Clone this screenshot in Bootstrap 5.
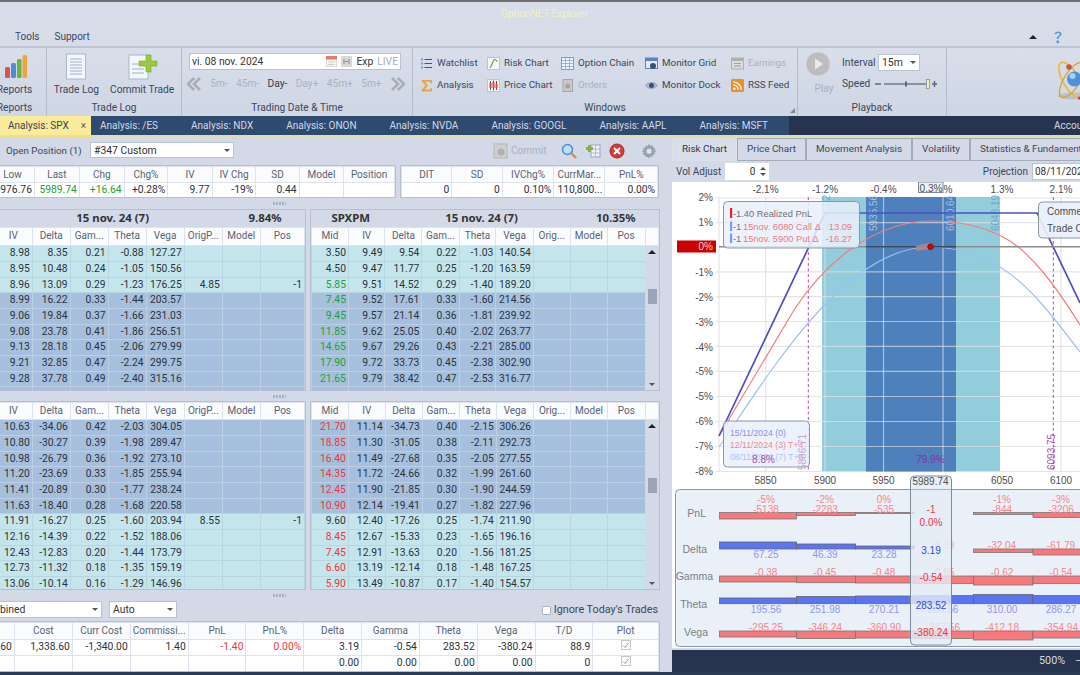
<!DOCTYPE html>
<html lang="en">
<head>
<meta charset="utf-8">
<title>OptionNET Explorer</title>
<link href="https://cdn.jsdelivr.net/npm/bootstrap@5.3.0/dist/css/bootstrap.min.css" rel="stylesheet">
<style>
html,body{margin:0;width:1080px;height:675px;overflow:hidden}
body{background:#d3d9e7;color:#3c4759;font-family:Roboto,"Noto Sans",sans-serif;font-size:10.2px;line-height:14px}
.top-strip{height:2px;background:#6f6f6f}
.title-row{height:25px;background:#d6dde9;color:#f1efc4;font-size:10px;line-height:24px;padding-left:501px}
.menu-row{height:19px;background:#d6dde9;padding:1px 0 0 15px;gap:15px;line-height:18px;font-size:10px}
.menu-tools{margin-left:auto;margin-right:17px;gap:16px}
.tri-up{width:0;height:0;border:4px solid transparent;border-top:0;border-bottom-color:#222}
.ribbon{height:70px;border-top:2px solid #bcc4d2;background:linear-gradient(#d8deea,#cfd6e4)}
.rb-group{display:flex;flex-direction:column;border-right:1px solid #b4bccb;flex:none;height:68px;position:relative}
.rb-body{flex:1;min-height:0}
.rb-label{height:17px;line-height:17px;text-align:center}
.rb-reports{width:64px;margin-left:-17px}
.rb-trade{width:135px}
.rb-date{width:231px;padding-left:7px}
.rb-date .rb-label{margin-left:-7px}
.rb-win{width:385px}
.rb-play{width:149px}
.big-btn{display:flex;flex-direction:column;align-items:center;padding-top:4px}
.big-btn svg{height:30px;margin-bottom:1px}
.trade-btns{gap:11px}
.date-box{width:212px;height:17px;margin-top:5px;background:#fff;border:1px solid #b9c2d1;padding:0 2px 0 2px;color:#333;font-size:10.3px}
.live-tag{color:#a4b0c3}
.step-row{height:19px;margin-top:4px;width:218px;margin-left:-2px;color:#aab2bf;font-size:10.2px}
.step-on{color:#2f3a4c}
.win-grid{display:grid;grid-template-columns:67px 74px 84px 86px auto;grid-auto-rows:22px;padding:4px 0 0 7px;font-size:9.8px}
.win-cell{display:flex;align-items:center;gap:4px}
.win-cell svg{width:13px;height:13px;flex:none}
.off-txt{color:#a9b1bd}
.corner-mark{position:absolute;right:2px;bottom:3px;width:0;height:0;border-style:solid;border-width:0 0 5px 5px;border-color:transparent transparent #7c8798}
.play-col{width:44px;padding:3px 0 0 8px;color:#a9b1bd;text-align:center}
.play-col svg{display:block;width:26px;height:26px;margin:0 0 5px -1px}
.rate-col{padding-top:6px}
.lbl-int{width:35px}
.lbl-speed{width:29px}
.combo-box{background:#fff;border:1px solid #b9c2d1;padding:0 3px;color:#333;height:17px;line-height:15px;font-size:10.4px}
.combo-int{width:42px;margin-left:1px}
.caret-dn{width:0;height:0;border:3px solid transparent;border-bottom:0;border-top-color:#555}
.speed-row{margin-top:4px;height:18px;gap:3px}
.doc-bar{height:19px;background:#26344f;color:#cfd9e8;line-height:18px;padding-top:0}
.doc-tabs{width:789px;flex:none;background:#2f4a6f;border:0;flex-wrap:nowrap}
.doc-tabs .nav-link{color:#cfd9e8;padding:1px 16.5px 0;border:0;border-radius:0;font-size:10px;line-height:18px;white-space:nowrap}
.doc-tabs .nav-item:nth-child(2) .nav-link{padding-left:9px}
.doc-tabs .nav-link.active{background:#faeb9a;color:#3a4356;width:91px;padding:1px 0 0 8px}
.tab-x{margin-left:12px;color:#555}
.acct-lbl{margin-left:265px;flex:none;font-size:10px;padding-top:1px}
.sun-line{height:2px;background:linear-gradient(90deg,#f0e27e 91px,#dedfae 91px)}
.main-area{height:535px}
.left-pane{width:670px;flex:none}
.right-pane{width:410px;flex:none;padding-left:2px}
.pos-bar{height:28px;padding:5px 0 0 6px}
.pos-lbl{width:76px;flex:none;font-size:9.8px;white-space:nowrap;padding-top:2px}
.combo-pos{width:144px;margin-left:8px;height:16px}
.pos-tools{margin-left:auto;padding:1px 13px 0 0}
.pos-tools svg{width:16px;height:16px;flex:none}
.commit-off{color:#a9b1bd;width:50px;margin-right:18px;gap:2px;font-size:10px}
.sum-row{gap:4px;height:33px}
.gutter{height:11px;position:relative}
.gutter::after{content:"";position:absolute;left:273px;top:4px;width:13px;height:3px;background:repeating-linear-gradient(90deg,#aab3c3 0 2px,transparent 2px 3px)}
.gut-b{height:10px}
.cell-box{overflow:hidden;flex:none;border:1px solid #b7c0d0;background:#fff}
.sum-a{width:396px;border-left:0}
.sum-b{width:259px}
.opt-pair{gap:4px;align-items:flex-start}
.opt-l{width:306px;border-left:0}
.opt-r{width:350px;position:relative}
.box-hi{height:182px}
.box-lo{height:189px}
.date-band{height:17px;background:#d3d9e7;color:#333;font-family:"Noto Sans",sans-serif;font-weight:700;font-size:11.4px;line-height:16px;text-align:center}
.band-a{width:226px}
.band-b{width:80px}
.band-d{width:183px}
.band-e{width:87px}
.grid-tbl.table{table-layout:fixed;width:auto;margin:0;--bs-table-bg:#fff;--bs-table-color:#2a3240;color:#2a3240;--cell-line:#dde2ec}
.sum-a .grid-tbl.table{margin-left:-10px}
.opt-l .grid-tbl.table{margin-left:-6px}
.pos-grid .grid-tbl.table{margin-left:-44px}
.grid-tbl.table>:not(caption)>*>*{padding:0 2px;height:16px;line-height:14px;font-size:10.3px;text-align:right;white-space:nowrap;overflow:hidden;border:1px solid var(--cell-line);box-shadow:none;background-color:var(--bs-table-bg)}
.grid-tbl.table>thead>tr>th{height:17px;font-weight:400;text-align:center;vertical-align:middle;--bs-table-color:#586375;color:#586375;--bs-table-bg:#fafbfd;line-height:14px;font-size:10px}
.sum-row .grid-tbl.table>thead>tr>th{height:16px}
.box-hi .grid-tbl.table>thead>tr>th{height:18px;padding-bottom:2px}
.grid-tbl.table>tbody>tr:nth-child(3n)>td{height:15px}
.grid-tbl.table>tbody>tr.rw-lt{--bs-table-bg:#c5e5ec;--cell-line:#b7d6df}
.grid-tbl.table>tbody>tr.rw-dk{--bs-table-bg:#a6bfdc;--cell-line:#bccfe4}
.grid-tbl.table>tbody>tr>td.tx-up{--bs-table-color:#22a034;color:#22a034}
.grid-tbl.table>tbody>tr>td.tx-dn{--bs-table-color:#f0333d;color:#f0333d}
.c-37{width:37.4px}
.c-38{width:38.2px}
.scroll-track{position:absolute;right:0;bottom:0;width:14px;background:#d3d9e7;display:flex;flex-direction:column;align-items:center;justify-content:space-between;padding:4px 0}
.box-hi .scroll-track{top:36px}
.box-lo .scroll-track{top:18px}
.scroll-thumb{width:9px;height:15px;background:#9aa4b4;position:absolute;left:3px}
.box-hi .scroll-thumb{top:43px}
.box-lo .scroll-thumb{top:58px}
.ctl-row{height:20px;align-items:flex-start}
.combo-comb{width:103px;margin-left:-1px;padding-left:0}
.combo-auto{width:68px;margin-left:7px}
.trade-check{margin-left:auto;margin-right:12px;gap:3px;height:18px;font-size:10.8px}
.trade-check .form-check-input{width:9px;height:9px;margin:0;border-radius:1px;border-color:#aab3c3}
.pos-grid{width:660px;border-left:0;height:51px}
.grid-tbl.table>tbody>tr>td.tx-mid{text-align:center}
.tick-box{display:block;width:10px;height:10px;margin:0 auto}
.pane-tabs{height:24px;border:0;flex-wrap:nowrap;padding-top:1px;margin-bottom:0}
.pane-tabs .nav-link{height:23px;padding:0 9px;border:1px solid #a2acbc;border-radius:0;color:#3c4759;background:#d3d9e7;line-height:20px;font-size:9.9px;margin:0;white-space:nowrap}
.pane-tabs .nav-link.active{color:#2e3848;background:#d8deea;border-bottom-color:#d8deea}
.vol-row{height:21px;padding:0 0 0 4px;font-size:10px}
.spin-box{width:44px;height:17px;margin-left:4px;background:#fff;padding:0 3px 0 0;gap:5px;color:#333;justify-content:flex-end}
.spin-arrows{width:6px;display:flex;flex-direction:column;gap:3px}
.spin-arrows i{display:block;width:0;height:0;border:3px solid transparent}
.spin-arrows i:first-child{border-top:0;border-bottom-color:#555}
.spin-arrows i:last-child{border-bottom:0;border-top-color:#555}
.proj-lbl{margin-left:auto;flex:none}
.proj-box{width:60px;margin-left:4px;margin-right:-12px;height:17px;background:#fff;border:1px solid #b9c2d1;padding:0 2px;color:#333;flex:none;line-height:15px;overflow:hidden;white-space:nowrap}
.risk-svg{display:block;width:408px;height:466px;background:#fff}
.risk-svg text{font-family:"Liberation Sans",sans-serif;font-size:10px;fill:#4d4d4d}
.risk-svg .t-m{text-anchor:middle}
.risk-svg .t-e{text-anchor:end}
.risk-svg .gl{stroke:#e4e4e4;stroke-width:1.2;fill:none}
.risk-svg .gl-o{stroke:rgba(228,228,228,.65);stroke-width:1.2;fill:none}
.risk-svg .lbl-dk{fill:rgba(190,214,240,.75)}
.risk-svg .lbl-lt{fill:#6ea7c9}
.risk-svg .leg-a{font-size:9.3px;fill:#6b6f76}
.risk-svg .leg-r{font-size:9.3px;fill:#f3767c}
.risk-svg .leg-b{font-size:8.7px}
.risk-svg .side-lbl{font-size:10.5px;fill:#7a7f87}
.risk-svg .pnl-r{fill:#f0333d}
.risk-svg .pale-r{fill:#f3868c}
.risk-svg .pale-b{fill:#8b96f5}
.risk-svg .str-b{fill:#3746e0}
.risk-svg .bar-r{fill:#f6797d;stroke:#777;stroke-width:.8}
.risk-svg .bar-b{fill:#5a74f2;stroke:#666;stroke-width:.8}
.risk-svg .purple{fill:#8e2ea0}
.risk-svg .zero-txt{fill:#f2cfcf}
.risk-svg .be-pale{fill:#c9a5d0}
.status-bar{height:22px;background:#26344f;color:#d3dae6;margin-top:2px;padding-left:367px;gap:10px;font-size:10.8px;line-height:21px}
.foot-strip{height:3px;background:#2a3a55}
</style>
</head>
<body>
<div class="top-strip"></div>
<div class="title-row">OptionNET Explorer</div>
<div class="menu-row d-flex">
  <span>Tools</span><span>Support</span>
  <div class="menu-tools d-flex align-items-center">
    <span class="tri-up"></span>
    <svg width="10" height="14" viewBox="0 0 10 14"><path d="M1.500 4C1.500 1 8.500 .5 8.500 4c0 2.500-3 2.500-3 5H3.800c0-3.500 2.800-3 2.800-5 0-1.500-3-1.500-3 0z" fill="#5b9bd8"/><circle cx="4.800" cy="11.800" r="1.500" fill="#5b9bd8"/></svg>
  </div>
</div>

<div class="ribbon d-flex">
  <div class="rb-group rb-reports">
    <div class="rb-body big-btn">
      <svg width="26" height="30" viewBox="0 0 26 30"><rect x="3" y="15" width="5" height="11" rx="1.500" fill="#d9534f"/><rect x="9" y="11" width="5" height="15" rx="1.500" fill="#4f8fd0"/><rect x="15" y="7" width="4.500" height="19" rx="1.500" fill="#6bb24a"/><rect x="20.500" y="3" width="4.500" height="23" rx="1.500" fill="#eea540"/></svg>
      <span>Reports</span>
    </div>
    <div class="rb-label">Reports</div>
  </div>
  <div class="rb-group rb-trade">
    <div class="rb-body d-flex justify-content-center trade-btns">
      <div class="big-btn"><svg width="24" height="30" viewBox="0 0 24 30"><rect x="2.500" y="2" width="19" height="25" fill="#f4f7fb" stroke="#a9b7cb"/><path d="M6 7h12M6 10h12M6 13h12M6 16h12M6 19h12M6 22h12" stroke="#9fb0c8"/></svg><span>Trade Log</span></div>
      <div class="big-btn"><svg width="32" height="30" viewBox="0 0 32 30"><rect x="3" y="3" width="19" height="24" fill="#f4f7fb" stroke="#a9b7cb"/><path d="M6 12h8M6 17h12M6 21h12" stroke="#9fb0c8"/><path d="M20 3h5v6h6v5h-6v6h-5v-6h-7V9h7z" fill="#9acb3c" stroke="#77a42b" stroke-width=".6"/></svg><span>Commit Trade</span></div>
    </div>
    <div class="rb-label">Trade Log</div>
  </div>
  <div class="rb-group rb-date">
    <div class="rb-body">
      <div class="date-box d-flex align-items-center">
        <span class="flex-grow-1">vi. 08 nov. 2024</span>
        <svg class="me-1" width="11" height="11" viewBox="0 0 11 11"><rect width="11" height="11" fill="#f3f3f3" stroke="#c6c6c6"/><rect width="11" height="3.500" fill="#e8786c"/><path d="M2 6h7M2 8.500h7" stroke="#cfcfcf"/></svg>
        <svg class="me-1" width="11" height="11" viewBox="0 0 11 11"><rect width="11" height="11" fill="#d8d8d8"/><path d="M3 3v5M8 3v5M4 5.500h3" stroke="#888"/></svg>
        <span class="me-1">Exp</span><span class="live-tag">LIVE</span>
      </div>
      <div class="step-row d-flex align-items-center justify-content-between">
        <svg width="15" height="14" viewBox="0 0 15 14"><path d="M7 1 1 7l6 6M13 1 7 7l6 6" fill="none" stroke="#a9aeb6" stroke-width="2.600"/></svg>
        <span>5m-</span><span>45m-</span><span class="step-on">Day-</span><span>Day+</span><span>45m+</span><span>5m+</span>
        <svg width="15" height="14" viewBox="0 0 15 14"><path d="M2 1l6 6-6 6M8 1l6 6-6 6" fill="none" stroke="#a9aeb6" stroke-width="2.600"/></svg>
      </div>
    </div>
    <div class="rb-label">Trading Date &amp; Time</div>
  </div>
  <div class="rb-group rb-win">
    <div class="rb-body win-grid">
      <div class="win-cell"><svg viewBox="0 0 13 13"><path d="M4.500 2.500H12M4.500 6.500H12M4.500 10.500H12" stroke="#48566c" stroke-width="1.200"/><path d="M1 1.500h2v2H1zM1 5.500h2v2H1zM1 9.500h2v2H1z" fill="#6fa0d8"/></svg><span>Watchlist</span></div>
      <div class="win-cell"><svg viewBox="0 0 13 13"><rect x=".5" y=".5" width="12" height="12" fill="#f6f7f9" stroke="#bcc4d0"/><path d="M2.500 10.500c3 0 2.500-8 5.500-8 1.500 0 1.500 2 2.500 2" fill="none" stroke="#6aa84f" stroke-width="1.200"/></svg><span>Risk Chart</span></div>
      <div class="win-cell"><svg viewBox="0 0 13 13"><rect x=".5" y=".5" width="12" height="12" fill="#eef3fb" stroke="#7f9ccc"/><path d="M.5 3.500h12M.5 6.500h12M.5 9.500h12M4.500 .5v12M8.500 .5v12" stroke="#7f9ccc" stroke-width=".7"/></svg><span>Option Chain</span></div>
      <div class="win-cell"><svg viewBox="0 0 13 13"><rect x=".5" y="1" width="12" height="10.500" fill="#dfe8f5" stroke="#5b86bd"/><rect x=".5" y="1" width="12" height="3" fill="#5b86bd"/><circle cx="8" cy="9" r="3" fill="#39506f"/></svg><span>Monitor Grid</span></div>
      <div class="win-cell off-txt"><svg viewBox="0 0 13 13"><rect x=".5" y="1" width="12" height="11" fill="#dcdcdc" stroke="#b0b0b0"/><rect x=".5" y="1" width="12" height="3" fill="#b0b0b0"/><path d="M3 6.500h7M3 9h7" stroke="#a0a0a0"/></svg><span>Earnings</span></div>

      <div class="win-cell"><svg viewBox="0 0 13 13"><path d="M1.500 1H12v3.500h-1L10 2.800H5L8 6.500 5 10.500h5.200l1-1.800h1L12 12.500H1.500v-1.200L5.500 6.500 1.500 2z" fill="#eda33b"/></svg><span>Analysis</span></div>
      <div class="win-cell"><svg viewBox="0 0 13 13"><rect x=".5" y=".5" width="12" height="12" fill="#f8f4f4" stroke="#c3c3c8"/><path d="M3.500 2v9M6.500 1.500v10M9.500 2v9" stroke="#555"/><rect x="2.500" y="4" width="2" height="5" fill="#d24a43"/><rect x="5.500" y="3" width="2" height="6" fill="#d24a43"/><rect x="8.500" y="5" width="2" height="4" fill="#d24a43"/></svg><span>Price Chart</span></div>
      <div class="win-cell off-txt"><svg viewBox="0 0 13 13"><rect x="2" y=".5" width="9.500" height="12" fill="#c9c9c9" stroke="#a6a6a6"/><circle cx="6.700" cy="7" r="2.500" fill="#a3a3a3"/></svg><span>Orders</span></div>
      <div class="win-cell"><svg viewBox="0 0 13 13"><path d="M.5 6.500C3 2.500 10 2.500 12.500 6.500 10 10.500 3 10.500 .5 6.500z" fill="#a9bbd4" stroke="#7c8ca5" stroke-width=".6"/><circle cx="6.500" cy="6.500" r="2.500" fill="#3d4f6c"/></svg><span>Monitor Dock</span></div>
      <div class="win-cell"><svg viewBox="0 0 13 13"><rect width="13" height="13" rx="1.500" fill="#ef8d26"/><circle cx="3.300" cy="9.700" r="1.300" fill="#fff"/><path d="M2.200 5.800a5 5 0 0 1 5 5M2.200 2.800a8 8 0 0 1 8 8" fill="none" stroke="#fff" stroke-width="1.300"/></svg><span>RSS Feed</span></div>
    </div>
    <div class="rb-label">Windows</div>
    <span class="corner-mark"></span>
  </div>
  <div class="rb-group rb-play">
    <div class="rb-body d-flex">
      <div class="play-col">
        <svg viewBox="0 0 26 26"><circle cx="13" cy="13" r="12" fill="#bdbdbd" stroke="#d5d5d5"/><path d="M10 7.500 18 13l-8 5.500z" fill="#e9e9e9"/></svg>
        <span>Play</span>
      </div>
      <div class="rate-col">
        <div class="d-flex align-items-center"><span class="lbl-int">Interval</span><div class="combo-box combo-int d-flex align-items-center justify-content-between"><span>15m</span><i class="caret-dn"></i></div></div>
        <div class="speed-row d-flex align-items-center"><span class="lbl-speed">Speed</span>
          <svg width="64" height="12" viewBox="0 0 64 12"><path d="M1 6h6" stroke="#667" stroke-width="1.500"/><path d="M10 6h42" stroke="#8a93a3" stroke-width="2"/><path d="M32 3.500v5" stroke="#667" stroke-width="2"/><rect x="52.500" y="1.500" width="3" height="9" fill="#f3ecc0" stroke="#777" stroke-width=".6"/><path d="M60.500 3v6M58 6h5" stroke="#667" stroke-width="1.500"/></svg>
        </div>
      </div>
    </div>
    <div class="rb-label">Playback</div>
  </div>
  <div class="flex-grow-1">
    <svg class="d-block ms-auto" width="133" height="60" viewBox="947 48 133 60"><ellipse cx="1074" cy="96" rx="16" ry="3.500" fill="#bbc1cc"/><ellipse cx="1071" cy="80" rx="8" ry="20" transform="rotate(-30 1071 80)" fill="none" stroke="#e8bb37" stroke-width="1.600"/><ellipse cx="1072" cy="80" rx="8" ry="20" transform="rotate(32 1072 80)" fill="none" stroke="#d9a92e" stroke-width="1.400"/><circle cx="1074.500" cy="79" r="7.500" fill="#4b93d6"/><circle cx="1072.500" cy="76" r="3" fill="#a8d2f2"/><circle cx="1069" cy="67" r="2.800" fill="#c8573a"/><circle cx="1079.500" cy="98" r="1.600" fill="#d33"/></svg>
  </div>
</div>

<div class="doc-bar d-flex">
  <ul class="nav doc-tabs">
    <li class="nav-item"><a class="nav-link active" href="#">Analysis: SPX<span class="tab-x">×</span></a></li>
    <li class="nav-item"><a class="nav-link" href="#">Analysis: /ES</a></li>
    <li class="nav-item"><a class="nav-link" href="#">Analysis: NDX</a></li>
    <li class="nav-item"><a class="nav-link" href="#">Analysis: ONON</a></li>
    <li class="nav-item"><a class="nav-link" href="#">Analysis: NVDA</a></li>
    <li class="nav-item"><a class="nav-link" href="#">Analysis: GOOGL</a></li>
    <li class="nav-item"><a class="nav-link" href="#">Analysis: AAPL</a></li>
    <li class="nav-item"><a class="nav-link" href="#">Analysis: MSFT</a></li>
  </ul>
  <span class="acct-lbl">Account</span>
</div>
<div class="sun-line"></div>

<div class="main-area d-flex">
  <div class="left-pane">
    <div class="pos-bar d-flex">
      <span class="pos-lbl">Open Position (1)</span>
      <div class="combo-box combo-pos d-flex align-items-center justify-content-between"><span>#347 Custom</span><i class="caret-dn"></i></div>
      <div class="pos-tools d-flex align-items-start">
        <div class="commit-off d-flex align-items-center"><svg viewBox="0 0 16 16"><rect x="1" y="1" width="13" height="14" fill="#cfcfcf" stroke="#b5b5b5"/><circle cx="8" cy="9" r="3.500" fill="#b0b0b0"/></svg><span>Commit</span></div>
        <svg class="me-1" viewBox="0 0 16 16"><circle cx="6.500" cy="6.500" r="5" fill="#bfdcf5" stroke="#4f8fd0" stroke-width="1.500"/><path d="M10.500 10.500 15 15" stroke="#d98b3a" stroke-width="2.400"/></svg>
        <svg class="ms-1 me-1" viewBox="0 0 16 16"><rect x="6" y="2" width="9" height="12" fill="#eef2f7" stroke="#9aa7ba"/><path d="M10.500 2v12M6 6h9M6 10h9" stroke="#9aa7ba" stroke-width=".7"/><path d="M3 2h3v2h2v3H6v2H3V7H1V4h2z" fill="#86b53a"/></svg>
        <svg class="ms-1" viewBox="0 0 16 16"><circle cx="8" cy="8" r="7" fill="#d63a34" stroke="#a92a26"/><path d="M5 5l6 6M11 5l-6 6" stroke="#fff" stroke-width="2"/></svg>
        <svg class="ms-3" viewBox="0 0 16 16"><path d="M8 1.500l1.200 1.800 2-.7.300 2.100 2.100.3-.7 2 1.800 1-1.800 1 .7 2-2.100.3-.3 2.100-2-.7L8 15l-1.200-1.800-2 .7-.3-2.100-2.100-.3.7-2-1.800-1 1.800-1-.7-2 2.100-.3.300-2.100 2 .7z" fill="#9aa3b0" stroke="#7f8896" stroke-width=".5"/><circle cx="8" cy="8.300" r="2.500" fill="#dfe3ea"/></svg>
      </div>
    </div>

    <div class="sum-row d-flex">
      <div class="cell-box sum-a">
        <table class="table grid-tbl">
          <colgroup><col style="width:44px"><col style="width:45px"><col style="width:45px"><col style="width:44px"><col style="width:45px"><col style="width:44px"><col style="width:44px"><col style="width:45px"><col style="width:51px"></colgroup>
          <thead><tr><th>Low</th><th>Last</th><th>Chg</th><th>Chg%</th><th>IV</th><th>IV Chg</th><th>SD</th><th>Model</th><th>Position</th></tr></thead>
          <tbody><tr><td>5976.76</td><td class="tx-up">5989.74</td><td class="tx-up">+16.64</td><td>+0.28%</td><td>9.77</td><td>-19%</td><td>0.44</td><td></td><td></td></tr></tbody>
        </table>
      </div>
      <div class="cell-box sum-b">
        <table class="table grid-tbl">
          <colgroup><col style="width:51px"><col style="width:51px"><col style="width:52px"><col style="width:51px"><col style="width:53px"></colgroup>
          <thead><tr><th>DIT</th><th>SD</th><th>IVChg%</th><th>CurrMar...</th><th>PnL%</th></tr></thead>
          <tbody><tr><td>0</td><td>0</td><td>0.10%</td><td>110,800...</td><td>0.00%</td></tr></tbody>
        </table>
      </div>
    </div>
    <div class="gutter"></div>

    <div class="opt-pair d-flex">
      <div class="cell-box opt-l box-hi">
        <div class="date-band d-flex"><span class="band-a">15 nov. 24 (7)</span><span class="band-b">9.84%</span></div>
        <table class="table grid-tbl">
          <colgroup><col class="c-38"><col class="c-38"><col class="c-38"><col class="c-38"><col class="c-38"><col class="c-38"><col class="c-38"><col style="width:45px"></colgroup>
          <thead><tr><th>IV</th><th>Delta</th><th>Gam...</th><th>Theta</th><th>Vega</th><th>OrigP...</th><th>Model</th><th>Pos</th></tr></thead>
          <tbody>
            <tr class="rw-lt"><td>8.98</td><td>8.35</td><td>0.21</td><td>-0.88</td><td>127.27</td><td></td><td></td><td></td></tr>
            <tr class="rw-lt"><td>8.95</td><td>10.48</td><td>0.24</td><td>-1.05</td><td>150.56</td><td></td><td></td><td></td></tr>
            <tr class="rw-lt"><td>8.96</td><td>13.09</td><td>0.29</td><td>-1.23</td><td>176.25</td><td>4.85</td><td></td><td>-1</td></tr>
            <tr class="rw-dk"><td>8.99</td><td>16.22</td><td>0.33</td><td>-1.44</td><td>203.57</td><td></td><td></td><td></td></tr>
            <tr class="rw-dk"><td>9.06</td><td>19.84</td><td>0.37</td><td>-1.66</td><td>231.03</td><td></td><td></td><td></td></tr>
            <tr class="rw-dk"><td>9.08</td><td>23.78</td><td>0.41</td><td>-1.86</td><td>256.51</td><td></td><td></td><td></td></tr>
            <tr class="rw-dk"><td>9.13</td><td>28.18</td><td>0.45</td><td>-2.06</td><td>279.99</td><td></td><td></td><td></td></tr>
            <tr class="rw-dk"><td>9.21</td><td>32.85</td><td>0.47</td><td>-2.24</td><td>299.75</td><td></td><td></td><td></td></tr>
            <tr class="rw-dk"><td>9.28</td><td>37.78</td><td>0.49</td><td>-2.40</td><td>315.16</td><td></td><td></td><td></td></tr>
            <tr class="rw-dk"><td></td><td></td><td></td><td></td><td></td><td></td><td></td><td></td></tr>
          </tbody>
        </table>
      </div>
      <div class="cell-box opt-r box-hi">
        <div class="date-band d-flex"><span class="band-b">SPXPM</span><span class="band-d">15 nov. 24 (7)</span><span class="band-e">10.35%</span></div>
        <table class="table grid-tbl">
          <colgroup><col class="c-37"><col class="c-37"><col class="c-37"><col class="c-37"><col class="c-37"><col class="c-37"><col class="c-37"><col class="c-37"><col style="width:39px"><col style="width:14px"></colgroup>
          <thead><tr><th>Mid</th><th>IV</th><th>Delta</th><th>Gam...</th><th>Theta</th><th>Vega</th><th>Orig...</th><th>Model</th><th>Pos</th><th></th></tr></thead>
          <tbody>
            <tr class="rw-lt"><td>3.50</td><td>9.49</td><td>9.54</td><td>0.22</td><td>-1.03</td><td>140.54</td><td></td><td></td><td></td><td></td></tr>
            <tr class="rw-lt"><td>4.50</td><td>9.47</td><td>11.77</td><td>0.25</td><td>-1.20</td><td>163.59</td><td></td><td></td><td></td><td></td></tr>
            <tr class="rw-lt"><td class="tx-up">5.85</td><td>9.51</td><td>14.52</td><td>0.29</td><td>-1.40</td><td>189.20</td><td></td><td></td><td></td><td></td></tr>
            <tr class="rw-dk"><td class="tx-up">7.45</td><td>9.52</td><td>17.61</td><td>0.33</td><td>-1.60</td><td>214.56</td><td></td><td></td><td></td><td></td></tr>
            <tr class="rw-dk"><td class="tx-up">9.45</td><td>9.57</td><td>21.14</td><td>0.36</td><td>-1.81</td><td>239.92</td><td></td><td></td><td></td><td></td></tr>
            <tr class="rw-dk"><td class="tx-up">11.85</td><td>9.62</td><td>25.05</td><td>0.40</td><td>-2.02</td><td>263.77</td><td></td><td></td><td></td><td></td></tr>
            <tr class="rw-dk"><td class="tx-up">14.65</td><td>9.67</td><td>29.26</td><td>0.43</td><td>-2.21</td><td>285.00</td><td></td><td></td><td></td><td></td></tr>
            <tr class="rw-dk"><td class="tx-up">17.90</td><td>9.72</td><td>33.73</td><td>0.45</td><td>-2.38</td><td>302.90</td><td></td><td></td><td></td><td></td></tr>
            <tr class="rw-dk"><td class="tx-up">21.65</td><td>9.79</td><td>38.42</td><td>0.47</td><td>-2.53</td><td>316.77</td><td></td><td></td><td></td><td></td></tr>
            <tr class="rw-dk"><td></td><td></td><td></td><td></td><td></td><td></td><td></td><td></td><td></td><td></td></tr>
          </tbody>
        </table>
        <div class="scroll-track"><i class="tri-up"></i><i class="scroll-thumb"></i><i class="caret-dn"></i></div>
      </div>
    </div>
    <div class="gutter gut-b"></div>

    <div class="opt-pair d-flex">
      <div class="cell-box opt-l box-lo">
        <table class="table grid-tbl">
          <colgroup><col class="c-38"><col class="c-38"><col class="c-38"><col class="c-38"><col class="c-38"><col class="c-38"><col class="c-38"><col style="width:45px"></colgroup>
          <thead><tr><th>IV</th><th>Delta</th><th>Gam...</th><th>Theta</th><th>Vega</th><th>OrigP...</th><th>Model</th><th>Pos</th></tr></thead>
          <tbody>
            <tr class="rw-dk"><td>10.63</td><td>-34.06</td><td>0.42</td><td>-2.03</td><td>304.05</td><td></td><td></td><td></td></tr>
            <tr class="rw-dk"><td>10.80</td><td>-30.27</td><td>0.39</td><td>-1.98</td><td>289.47</td><td></td><td></td><td></td></tr>
            <tr class="rw-dk"><td>10.98</td><td>-26.79</td><td>0.36</td><td>-1.92</td><td>273.10</td><td></td><td></td><td></td></tr>
            <tr class="rw-dk"><td>11.20</td><td>-23.69</td><td>0.33</td><td>-1.85</td><td>255.94</td><td></td><td></td><td></td></tr>
            <tr class="rw-dk"><td>11.41</td><td>-20.89</td><td>0.30</td><td>-1.77</td><td>238.24</td><td></td><td></td><td></td></tr>
            <tr class="rw-dk"><td>11.63</td><td>-18.40</td><td>0.28</td><td>-1.68</td><td>220.58</td><td></td><td></td><td></td></tr>
            <tr class="rw-lt"><td>11.91</td><td>-16.27</td><td>0.25</td><td>-1.60</td><td>203.94</td><td>8.55</td><td></td><td>-1</td></tr>
            <tr class="rw-lt"><td>12.16</td><td>-14.39</td><td>0.22</td><td>-1.52</td><td>188.06</td><td></td><td></td><td></td></tr>
            <tr class="rw-lt"><td>12.43</td><td>-12.83</td><td>0.20</td><td>-1.44</td><td>173.79</td><td></td><td></td><td></td></tr>
            <tr class="rw-lt"><td>12.73</td><td>-11.32</td><td>0.18</td><td>-1.35</td><td>159.19</td><td></td><td></td><td></td></tr>
            <tr class="rw-lt"><td>13.06</td><td>-10.14</td><td>0.16</td><td>-1.29</td><td>146.96</td><td></td><td></td><td></td></tr>
          </tbody>
        </table>
      </div>
      <div class="cell-box opt-r box-lo">
        <table class="table grid-tbl">
          <colgroup><col class="c-37"><col class="c-37"><col class="c-37"><col class="c-37"><col class="c-37"><col class="c-37"><col class="c-37"><col class="c-37"><col style="width:39px"><col style="width:14px"></colgroup>
          <thead><tr><th>Mid</th><th>IV</th><th>Delta</th><th>Gam...</th><th>Theta</th><th>Vega</th><th>Orig...</th><th>Model</th><th>Pos</th><th></th></tr></thead>
          <tbody>
            <tr class="rw-dk"><td class="tx-dn">21.70</td><td>11.14</td><td>-34.73</td><td>0.40</td><td>-2.15</td><td>306.26</td><td></td><td></td><td></td><td></td></tr>
            <tr class="rw-dk"><td class="tx-dn">18.85</td><td>11.30</td><td>-31.05</td><td>0.38</td><td>-2.11</td><td>292.73</td><td></td><td></td><td></td><td></td></tr>
            <tr class="rw-dk"><td class="tx-dn">16.40</td><td>11.49</td><td>-27.68</td><td>0.35</td><td>-2.05</td><td>277.55</td><td></td><td></td><td></td><td></td></tr>
            <tr class="rw-dk"><td class="tx-dn">14.35</td><td>11.72</td><td>-24.66</td><td>0.32</td><td>-1.99</td><td>261.60</td><td></td><td></td><td></td><td></td></tr>
            <tr class="rw-dk"><td class="tx-dn">12.45</td><td>11.90</td><td>-21.85</td><td>0.30</td><td>-1.90</td><td>244.59</td><td></td><td></td><td></td><td></td></tr>
            <tr class="rw-dk"><td class="tx-dn">10.90</td><td>12.14</td><td>-19.41</td><td>0.27</td><td>-1.82</td><td>227.96</td><td></td><td></td><td></td><td></td></tr>
            <tr class="rw-lt"><td>9.60</td><td>12.40</td><td>-17.26</td><td>0.25</td><td>-1.74</td><td>211.90</td><td></td><td></td><td></td><td></td></tr>
            <tr class="rw-lt"><td class="tx-dn">8.45</td><td>12.67</td><td>-15.33</td><td>0.23</td><td>-1.65</td><td>196.16</td><td></td><td></td><td></td><td></td></tr>
            <tr class="rw-lt"><td class="tx-dn">7.45</td><td>12.91</td><td>-13.63</td><td>0.20</td><td>-1.56</td><td>181.25</td><td></td><td></td><td></td><td></td></tr>
            <tr class="rw-lt"><td class="tx-dn">6.60</td><td>13.19</td><td>-12.14</td><td>0.18</td><td>-1.48</td><td>167.25</td><td></td><td></td><td></td><td></td></tr>
            <tr class="rw-lt"><td class="tx-dn">5.90</td><td>13.49</td><td>-10.87</td><td>0.17</td><td>-1.40</td><td>154.57</td><td></td><td></td><td></td><td></td></tr>
          </tbody>
        </table>
        <div class="scroll-track"><i class="tri-up"></i><i class="scroll-thumb"></i><i class="caret-dn"></i></div>
      </div>
    </div>
    <div class="gutter"></div>

    <div class="ctl-row d-flex">
      <div class="combo-box combo-comb d-flex align-items-center justify-content-between"><span>bined</span><i class="caret-dn"></i></div>
      <div class="combo-box combo-auto d-flex align-items-center justify-content-between"><span>Auto</span><i class="caret-dn"></i></div>
      <label class="trade-check d-flex align-items-center"><input class="form-check-input" type="checkbox">Ignore Today's Trades</label>
    </div>

    <div class="cell-box pos-grid">
      <table class="table grid-tbl">
        <colgroup><col style="width:58px"><col style="width:58px"><col style="width:58px"><col style="width:58px"><col style="width:58px"><col style="width:58px"><col style="width:58px"><col style="width:58px"><col style="width:58px"><col style="width:58px"><col style="width:58px"><col style="width:66px"></colgroup>
        <thead><tr><th></th><th>Cost</th><th>Curr Cost</th><th>Commissi...</th><th>PnL</th><th>PnL%</th><th>Delta</th><th>Gamma</th><th>Theta</th><th>Vega</th><th>T/D</th><th>Plot</th></tr></thead>
        <tbody>
          <tr><td>1,338.60</td><td>1,338.60</td><td>-1,340.00</td><td>1.40</td><td class="tx-dn">-1.40</td><td class="tx-dn">0.00%</td><td>3.19</td><td>-0.54</td><td>283.52</td><td>-380.24</td><td>88.9</td><td class="tx-mid"><svg class="tick-box" viewBox="0 0 10 10"><rect x=".5" y=".5" width="9" height="9" fill="#fff" stroke="#c3c8d0"/><path d="M2 5.500l2 2 4-5" fill="none" stroke="#8f98a5"/></svg></td></tr>
          <tr><td></td><td></td><td></td><td></td><td></td><td></td><td>0.00</td><td>0.00</td><td>0.00</td><td>0.00</td><td>0</td><td class="tx-mid"><svg class="tick-box" viewBox="0 0 10 10"><rect x=".5" y=".5" width="9" height="9" fill="#fff" stroke="#c3c8d0"/><path d="M2 5.500l2 2 4-5" fill="none" stroke="#8f98a5"/></svg></td></tr>
        </tbody>
      </table>
    </div>
  </div>

  <div class="right-pane">
    <ul class="nav nav-tabs pane-tabs">
      <li class="nav-item"><a class="nav-link active" href="#">Risk Chart</a></li>
      <li class="nav-item"><a class="nav-link" href="#">Price Chart</a></li>
      <li class="nav-item"><a class="nav-link" href="#">Movement Analysis</a></li>
      <li class="nav-item"><a class="nav-link" href="#">Volatility</a></li>
      <li class="nav-item"><a class="nav-link" href="#">Statistics &amp; Fundamentals</a></li>
    </ul>
    <div class="vol-row d-flex align-items-center">
      <span>Vol Adjust</span>
      <div class="spin-box d-flex align-items-center"><span>0</span><span class="spin-arrows"><i></i><i></i></span></div>
      <span class="proj-lbl">Projection</span>
      <div class="proj-box">08/11/2024</div>
    </div>

    <svg class="risk-svg" viewBox="672 182 408 466" xmlns="http://www.w3.org/2000/svg">
      <!-- value bands -->
      <rect x="822" y="197" width="178" height="274.500" fill="#93cddb"/>
      <rect x="866" y="197" width="90" height="274.500" fill="#4e80bc"/>
      <!-- grid -->
      <path class="gl" d="M716 198H822M716 222.600H822M716 271.800H822M716 296.600H822M716 321.500H822M716 346.400H822M716 371.300H822M716 396.500H822M716 421.500H822M716 446.500H822M716 471.500H822M1000 198H1080M1000 222.600H1080M1000 271.800H1080M1000 296.600H1080M1000 321.500H1080M1000 346.400H1080M1000 371.300H1080M1000 396.500H1080M1000 421.500H1080M1000 446.500H1080M1000 471.500H1080"/>
      <path class="gl-o" d="M822 222.600H1000M822 271.800H1000M822 296.600H1000M822 321.500H1000M822 346.400H1000M822 371.300H1000M822 396.500H1000M822 421.500H1000M822 446.500H1000"/>
      <path class="gl" d="M719 197V472M765.700 197V472M1061 197V472"/>
      <path class="gl-o" d="M825 197V472M883.500 197V472M943 197V472"/>
      <!-- band edge labels -->
      <text class="lbl-lt" transform="translate(830 231) rotate(-90)">5897.02</text>
      <text class="lbl-dk" transform="translate(877 231) rotate(-90)">5935.56</text>
      <text class="lbl-dk" transform="translate(954 231) rotate(-90)">6010.64</text>
      <text class="lbl-lt" transform="translate(999 231) rotate(-90)">6048.19</text>
      <!-- breakevens -->
      <path d="M808.300 197V472M1053.300 197V472" stroke="#b64bb9" stroke-width="1" stroke-dasharray="3 2.500" fill="none"/>
      <!-- curves -->
      <path d="M719 447C770 372 845 247 930 247C955 247 980 255 1000 267C1028 284 1052 315 1080 352" fill="none" stroke="#9fbff8" stroke-width="1.200"/>
      <path d="M719 436L794 310C830 255 880 221 932 221C958 221 982 226 1003 237C1030 251 1055 285 1080 325" fill="none" stroke="#f77b7f" stroke-width="1.200"/>
      <polyline points="719,436 825,213 1037,213 1080,303" fill="none" stroke="#4c50c0" stroke-width="1.700"/>
      <!-- zero line -->
      <path d="M719 246.700H1080" stroke="#8c8c8c" stroke-width="1.500"/>
      <path d="M866 246.700H956" stroke="#3f4a5a" stroke-width="1.500"/>
      <path d="M916 246v5l13-2v-6z" fill="#b98891" opacity=".85"/>
      <circle cx="930.500" cy="246.700" r="2.800" fill="#e00000" stroke="#600" stroke-width=".7"/>
      <!-- axis labels -->
      <g>
        <text class="t-m" x="765.500" y="193">-2.1%</text><text class="t-m" x="825" y="193">-1.2%</text><text class="t-m" x="883.500" y="193">-0.4%</text><text class="t-m" x="948" y="193">%</text><text class="t-m" x="1002" y="193">1.3%</text><text class="t-m" x="1061" y="193">2.1%</text>
        <rect x="918.500" y="182" width="24.500" height="10.500" fill="#eef2f8" stroke="#7d8796"/>
        <text class="t-m" x="931" y="191.500">0.3%</text>
        <text class="t-e" x="713" y="201">2%</text><text class="t-e" x="713" y="226">1%</text><text class="t-e" x="713" y="275.500">-1%</text><text class="t-e" x="713" y="300.500">-2%</text><text class="t-e" x="713" y="325.500">-3%</text><text class="t-e" x="713" y="350.500">-4%</text><text class="t-e" x="713" y="375">-5%</text><text class="t-e" x="713" y="400">-5%</text><text class="t-e" x="713" y="425">-6%</text><text class="t-e" x="713" y="450">-7%</text><text class="t-e" x="713" y="475">-8%</text>
        <rect x="677" y="240.500" width="39" height="12" fill="#cc0000"/>
        <text class="t-e zero-txt" x="713" y="250">0%</text>
        <text class="t-m" x="765.500" y="484">5850</text><text class="t-m" x="825" y="484">5900</text><text class="t-m" x="883.500" y="484">5950</text><text class="t-m" x="1002" y="484">6050</text><text class="t-m" x="1061" y="484">6100</text>
      </g>
      <!-- legends -->
      <rect x="723.500" y="201.500" width="136" height="46.500" rx="4" fill="#e9f0fb" fill-opacity=".86" stroke="#8a96a4"/>
      <rect x="730" y="208" width="2.200" height="10" fill="#ee1c25"/>
      <text class="leg-a" x="733" y="217">-1.40 Realized PnL</text>
      <rect x="730" y="221.500" width="2.200" height="9.500" fill="#7c9cf0"/>
      <text class="leg-a" x="733" y="230">-1</text><text x="743" y="230" class="leg-r">15nov. 6080 Call Δ</text><text class="t-e leg-r" x="852" y="230">13.09</text>
      <rect x="730" y="233.500" width="2.200" height="9.500" fill="#7c9cf0"/>
      <text class="leg-a" x="733" y="242">-1</text><text x="743" y="242" class="leg-r">15nov. 5900 Put Δ</text><text class="t-e leg-r" x="852" y="242">-16.27</text>
      <rect x="1038.500" y="202" width="60" height="36" rx="4" fill="#e9f0fb" fill-opacity=".9" stroke="#8a96a4"/>
      <text x="1047" y="215">Comme</text><text x="1047" y="232">Trade O</text>
      <rect x="723.500" y="421" width="86" height="46" rx="4" fill="#e9f0fb" fill-opacity=".86" stroke="#8a96a4"/>
      <text class="leg-b" x="730" y="436" style="fill:#8f8fe0">15/11/2024 (0)</text>
      <text class="leg-b" x="730" y="448" style="fill:#f58a8e">12/11/2024 (3) T+4</text>
      <text class="leg-b" x="730" y="459.500" style="fill:#a9c4fb">08/11/2024 (7) T+0</text>
      <text class="be-pale" transform="translate(806 470) rotate(-90)">5886.71</text>
      <text class="purple" transform="translate(1055 470) rotate(-90)" opacity=".8">6093.75</text>
      <text class="t-m purple" x="763.500" y="463" opacity=".8">8.8%</text>
      <text class="t-m purple" x="930.500" y="463">79.9%</text>

      <!-- greeks strip -->
      <rect x="675.500" y="489.500" width="420" height="157" rx="4" fill="#e9f0f7" stroke="#8a96a4"/>
      <text class="t-e side-lbl" x="706" y="517">PnL</text>
      <text class="t-e side-lbl" x="707" y="553">Delta</text>
      <text class="t-e side-lbl" x="713" y="580">Gamma</text>
      <text class="t-e side-lbl" x="707" y="608">Theta</text>
      <text class="t-e side-lbl" x="708" y="636">Vega</text>
      <!-- pnl -->
      <rect class="bar-r" x="719.500" y="512.500" width="77" height="6.500"/><rect class="bar-r" x="796.500" y="512.500" width="59" height="3"/><rect class="bar-r" x="855.500" y="512.500" width="59" height="1"/><rect class="bar-r" x="973.500" y="512.500" width="59.500" height="2"/><rect class="bar-r" x="1033" y="512.500" width="60" height="5"/>
      <text class="t-m pale-r" x="766" y="502.500">-5%</text><text class="t-m pale-r" x="825" y="502.500">-2%</text><text class="t-m pale-r" x="884" y="502.500">0%</text><text class="t-m pale-r" x="1002" y="502.500">-1%</text><text class="t-m pale-r" x="1061" y="502.500">-3%</text>
      <text class="t-m pale-r" x="766" y="513">-5138</text><text class="t-m pale-r" x="825" y="513">-2283</text><text class="t-m pale-r" x="884" y="513">-535</text><text class="t-m pale-r" x="1002" y="513">-844</text><text class="t-m pale-r" x="1061" y="513">-3206</text>
      <!-- delta -->
      <rect class="bar-b" x="719.500" y="542" width="77" height="7"/><rect class="bar-b" x="796.500" y="544" width="59" height="5"/><rect class="bar-b" x="855.500" y="546" width="59" height="3"/><rect class="bar-r" x="973.500" y="549" width="59.500" height="3.500"/><rect class="bar-r" x="1033" y="549" width="60" height="6"/>
      <text class="t-m pale-b" x="766" y="558">67.25</text><text class="t-m pale-b" x="825" y="558">46.39</text><text class="t-m pale-b" x="884" y="558">23.28</text>
      <text class="t-m pale-r" x="1002" y="548.500">-32.04</text><text class="t-m pale-r" x="1061" y="548.500">-61.79</text><text class="t-m pale-r" x="943" y="548.500" opacity=".6">-8.39</text>
      <!-- gamma -->
      <rect class="bar-r" x="719.500" y="576" width="77" height="6"/><rect class="bar-r" x="796.500" y="576" width="59" height="6.700"/><rect class="bar-r" x="855.500" y="576" width="59" height="7"/><rect class="bar-r" x="914.500" y="576" width="59" height="7.500"/><rect class="bar-r" x="973.500" y="576" width="59.500" height="9"/><rect class="bar-r" x="1033" y="576" width="60" height="7.500"/>
      <text class="t-m pale-r" x="766" y="576">-0.38</text><text class="t-m pale-r" x="825" y="576">-0.45</text><text class="t-m pale-r" x="884" y="576">-0.48</text><text class="t-m pale-r" x="943" y="576">-0.55</text><text class="t-m pale-r" x="1002" y="576">-0.62</text><text class="t-m pale-r" x="1061" y="576">-0.54</text>
      <!-- theta -->
      <rect class="bar-b" x="719.500" y="598" width="77" height="5.700"/><rect class="bar-b" x="796.500" y="596.500" width="59" height="7.200"/><rect class="bar-b" x="855.500" y="596" width="59" height="7.700"/><rect class="bar-b" x="914.500" y="595.500" width="59" height="8.200"/><rect class="bar-b" x="973.500" y="594.500" width="59.500" height="9.200"/><rect class="bar-b" x="1033" y="595.500" width="60" height="8.200"/>
      <text class="t-m pale-b" x="766" y="613">195.56</text><text class="t-m pale-b" x="825" y="613">251.98</text><text class="t-m pale-b" x="884" y="613">270.21</text><text class="t-m pale-b" x="943" y="613">286.56</text><text class="t-m pale-b" x="1002" y="613">310.00</text><text class="t-m pale-b" x="1061" y="613">286.27</text>
      <!-- vega -->
      <rect class="bar-r" x="719.500" y="631" width="77" height="6"/><rect class="bar-r" x="796.500" y="631" width="59" height="7.500"/><rect class="bar-r" x="855.500" y="631" width="59" height="7"/><rect class="bar-r" x="914.500" y="631" width="59" height="7.500"/><rect class="bar-r" x="973.500" y="631" width="59.500" height="9"/><rect class="bar-r" x="1033" y="631" width="60" height="7"/>
      <text class="t-m pale-r" x="766" y="631">-295.25</text><text class="t-m pale-r" x="825" y="631">-346.24</text><text class="t-m pale-r" x="884" y="631">-360.90</text><text class="t-m pale-r" x="943" y="631">-387.56</text><text class="t-m pale-r" x="1002" y="631">-412.18</text><text class="t-m pale-r" x="1061" y="631">-354.94</text>
      <!-- current price column -->
      <rect x="910.500" y="476" width="41" height="169" rx="4" fill="#e4ecf5" fill-opacity=".82" stroke="#7f8a99"/>
      <text class="t-m" x="930.500" y="484.500">5989.74</text>
      <path d="M910.500 489.500h41" stroke="#7f8a99" stroke-width=".5"/>
      <text class="t-m pnl-r" x="931" y="513">-1</text><text class="t-m pnl-r" x="931" y="525.500">0.0%</text>
      <text class="t-m str-b" x="931" y="553.500">3.19</text>
      <text class="t-m pnl-r" x="931" y="581">-0.54</text>
      <text class="t-m str-b" x="931" y="608.500">283.52</text>
      <text class="t-m pnl-r" x="931" y="635.500">-380.24</text>
    </svg>
    <div class="status-bar d-flex"><span>500%</span><span>–</span></div>
  </div>
</div>
<div class="foot-strip"></div>
</body>
</html>
